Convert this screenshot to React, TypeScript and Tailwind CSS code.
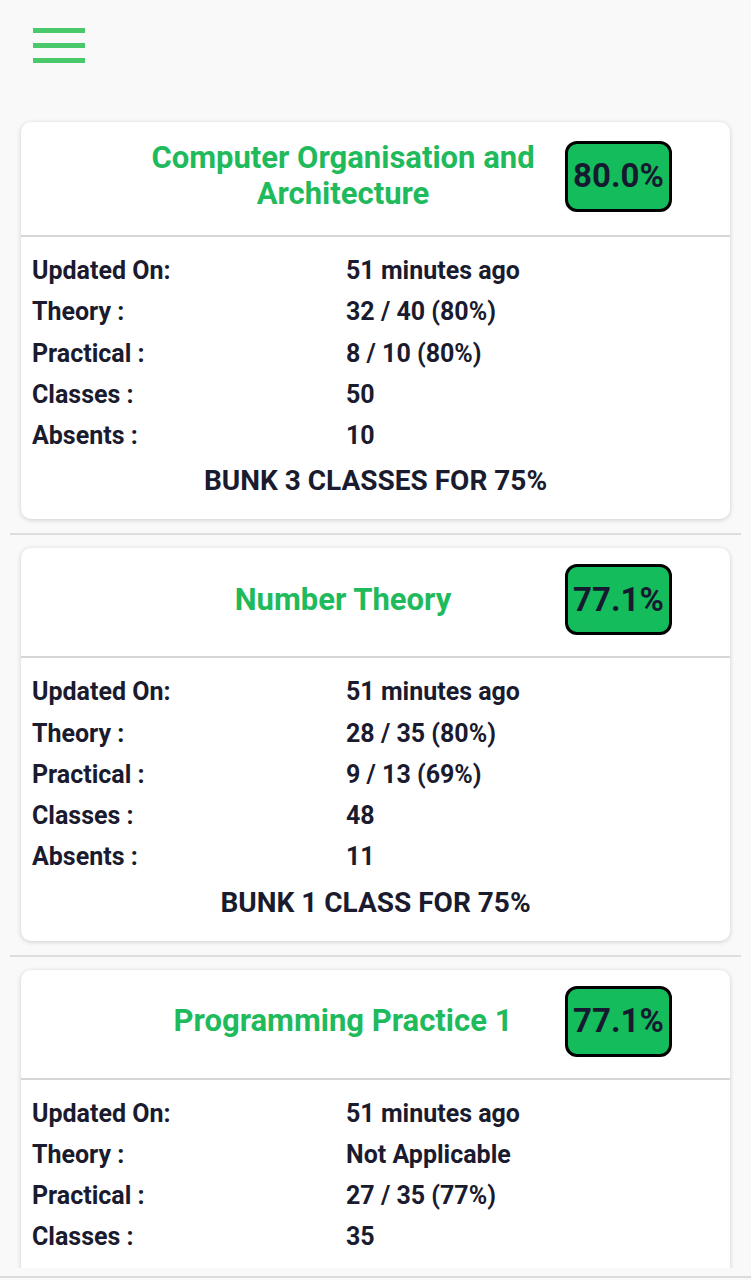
type Subject = {
  name: string
  percent: string
  updated: string
  theory: string
  practical: string
  classes: string
  absents?: string
  bunk?: string
}

const subjects: Subject[] = [
  {
    name: 'Computer Organisation and Architecture',
    percent: '80.0%',
    updated: '51 minutes ago',
    theory: '32 / 40 (80%)',
    practical: '8 / 10 (80%)',
    classes: '50',
    absents: '10',
    bunk: 'BUNK 3 CLASSES FOR 75%',
  },
  {
    name: 'Number Theory',
    percent: '77.1%',
    updated: '51 minutes ago',
    theory: '28 / 35 (80%)',
    practical: '9 / 13 (69%)',
    classes: '48',
    absents: '11',
    bunk: 'BUNK 1 CLASS FOR 75%',
  },
  {
    name: 'Programming Practice 1',
    percent: '77.1%',
    updated: '51 minutes ago',
    theory: 'Not Applicable',
    practical: '27 / 35 (77%)',
    classes: '35',
  },
]

function Row({ label, value }: { label: string; value: string }) {
  return (
    <div className="flex leading-[41.25px]">
      <span className="w-[314px] shrink-0">{label}</span>
      <span>{value}</span>
    </div>
  )
}

function SubjectCard({ s }: { s: Subject }) {
  return (
    <div className="mx-[21px] bg-white rounded-[10px] shadow-[0_1px_5px_rgba(0,0,0,0.18)] overflow-hidden">
      {/* header */}
      <div className="flex items-center pt-[16px] pb-[21px] pl-[100px] pr-[58px] border-b-2 border-[#d6d6d6]">
        <h2 className="flex-1 text-center text-[31px] leading-[36px] py-[2px] font-bold text-[#1fba5c]">
          {s.name}
        </h2>
        <div className="w-[107px] h-[71px] shrink-0 flex items-center justify-center rounded-[12px] border-[3px] border-black bg-[#14bc5b] text-[33px] font-bold text-[#151a30]">
          {s.percent}
        </div>
      </div>

      {/* details */}
      <div className="px-[11px] pt-[13px] pb-[18px] text-[25px] font-bold text-[#1a1b2e]">
        <Row label="Updated On:" value={s.updated} />
        <Row label="Theory :" value={s.theory} />
        <Row label="Practical :" value={s.practical} />
        <Row label="Classes :" value={s.classes} />
        {s.absents && <Row label="Absents :" value={s.absents} />}
        {s.bunk ? (
          <div className="mt-[4px] text-center text-[28px] leading-[41px]">{s.bunk}</div>
        ) : (
          <div className="h-[40px]" />
        )}
      </div>
    </div>
  )
}

export default function App() {
  return (
    <div
      className="h-[1280px] overflow-hidden bg-[#f9f9f9]"
      style={{ fontFamily: 'Roboto, "Liberation Sans", sans-serif' }}
    >
      <div className="h-[1268px] overflow-hidden">
        {/* top bar */}
        <div className="h-[122px] pt-[28px] pl-[33px]">
          <button className="flex flex-col gap-[10px]">
            <span className="block w-[52px] h-[5px] bg-[#4ac96b]" />
            <span className="block w-[52px] h-[5px] bg-[#4ac96b]" />
            <span className="block w-[52px] h-[5px] bg-[#4ac96b]" />
          </button>
        </div>

        {subjects.map((s, i) => (
          <div key={s.name}>
            {i > 0 && <div className="mx-[10px] mt-[14px] mb-[13px] h-[2px] bg-[#dedede]" />}
            <SubjectCard s={s} />
          </div>
        ))}
      </div>
      <div className="mt-[8px] h-[2px] bg-[#dcdcdc]" />
    </div>
  )
}
